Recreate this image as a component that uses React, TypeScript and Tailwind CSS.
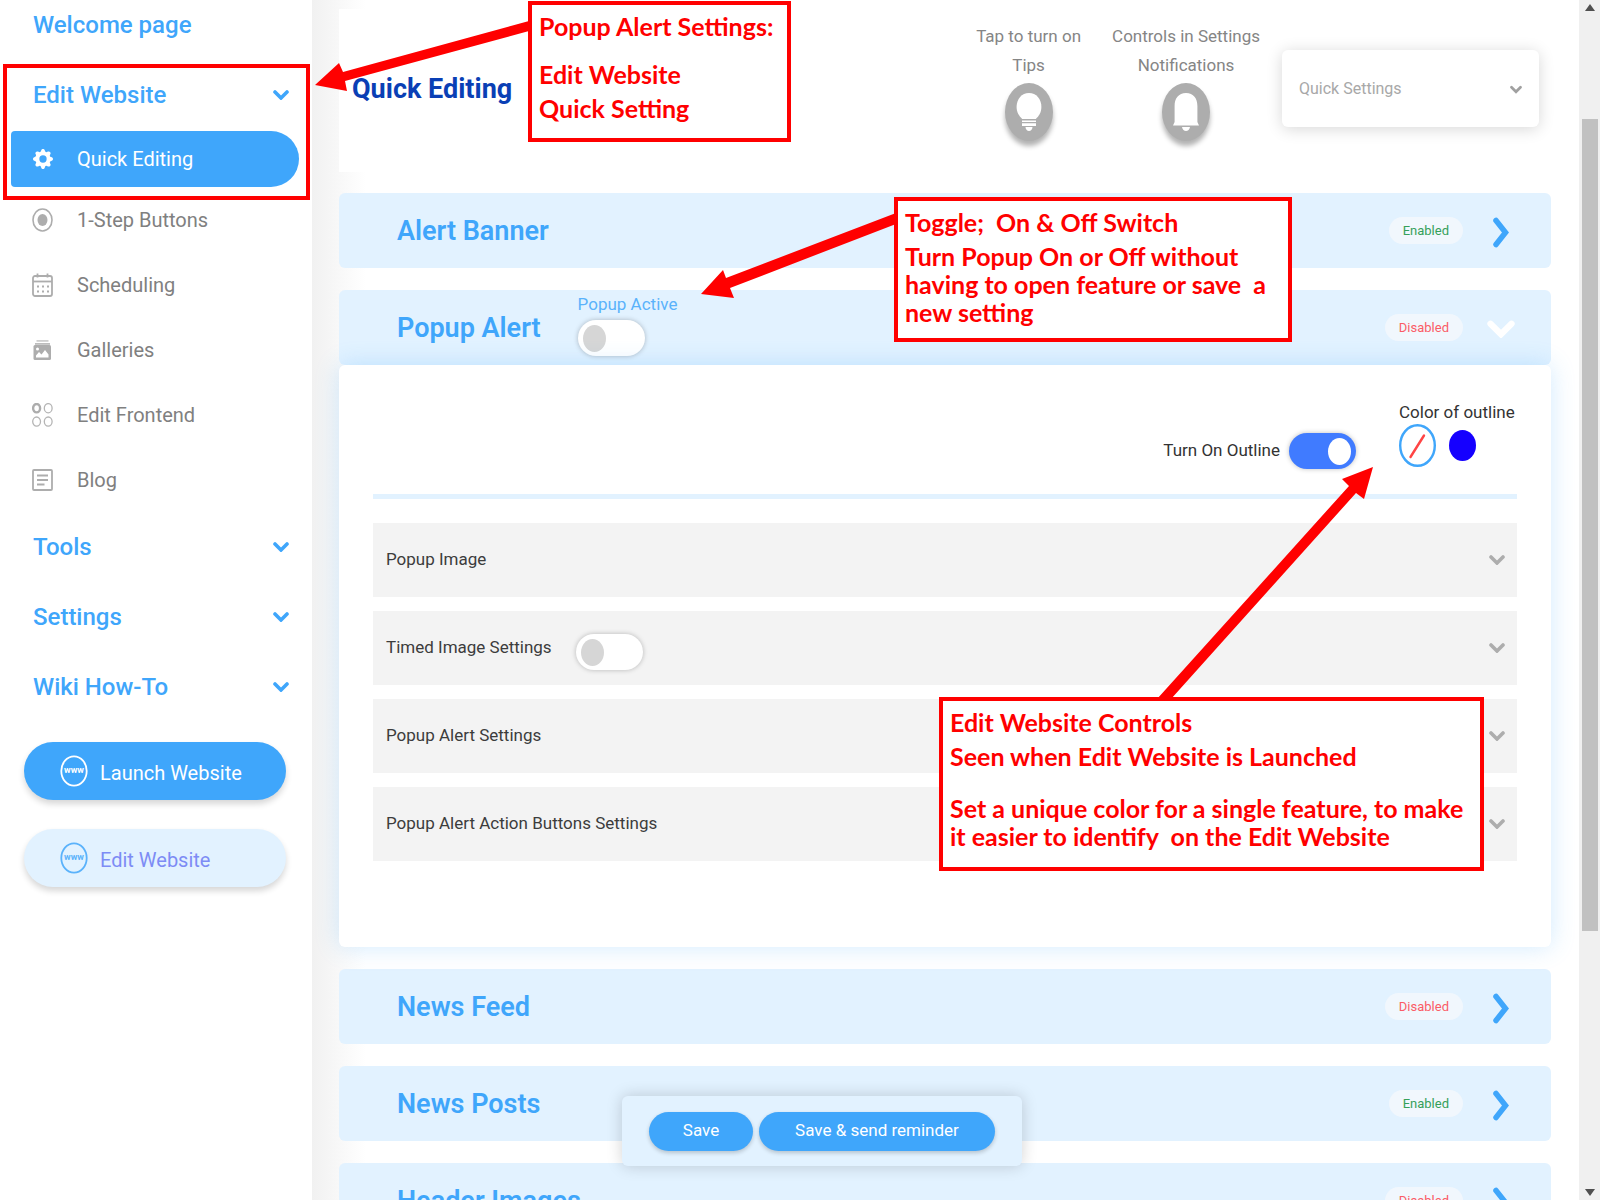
import { useState } from "react";
import type { ReactNode } from "react";
import { BsGearFill } from "react-icons/bs";

const Chevron = ({ className }: { className: string }) => (
  <svg viewBox="0 0 16 10" fill="none" stroke="currentColor" className={className} aria-hidden="true">
    <path d="M2 2l6 6 6-6" strokeWidth="3.6" strokeLinecap="round" />
  </svg>
);

const RadioIcon = () => (
  <svg viewBox="0 0 21 24" className="w-[21px] h-6" aria-hidden="true">
    <ellipse cx="10.5" cy="12" rx="9.5" ry="11" fill="none" stroke="#adadad" strokeWidth="1.6" />
    <ellipse cx="10.5" cy="12" rx="5" ry="6" fill="#adadad" />
  </svg>
);

const CalendarIcon = () => (
  <svg viewBox="0 0 21 24" className="w-[21px] h-6" fill="none" stroke="#adadad" aria-hidden="true">
    <rect x="1" y="3" width="19" height="20" rx="2" strokeWidth="1.8" />
    <path d="M1 8.5h19" strokeWidth="1.8" />
    <path d="M5.5 0.5v4M15.5 0.5v4" strokeWidth="1.8" />
    <path d="M5 13.5h12M5 18.5h12" strokeWidth="2" strokeDasharray="2 3" />
  </svg>
);

const GalleryIcon = () => (
  <svg viewBox="0 0 21 24" className="w-[21px] h-6" aria-hidden="true">
    <path d="M4.5 2h12v1.8h-12z" fill="#cfcfcf" />
    <path d="M3 5h15v1.800H3z" fill="#bdbdbd" />
    <rect x="1.5" y="7" width="17.5" height="15" rx="1.5" fill="#adadad" />
    <circle cx="5.5" cy="11" r="1.5" fill="#fff" />
    <path d="M4 19.5v-2l3-3.5 2.5 2.5L13 12l3.5 4.5v3z" fill="#fff" />
  </svg>
);

const CirclesIcon = () => (
  <svg viewBox="0 0 21 24" className="w-[21px] h-6" fill="none" stroke="#b5b5b5" aria-hidden="true">
    <ellipse cx="4.6" cy="5.2" rx="3.5" ry="4.2" strokeWidth="2.4" stroke="#adadad" />
    <ellipse cx="16.2" cy="5.2" rx="3.9" ry="4.6" strokeWidth="1.3" />
    <ellipse cx="4.6" cy="18.6" rx="3.9" ry="4.6" strokeWidth="1.3" />
    <ellipse cx="16.2" cy="18.6" rx="3.9" ry="4.6" strokeWidth="1.3" />
  </svg>
);

const BlogIcon = () => (
  <svg viewBox="0 0 21 24" className="w-[21px] h-6" fill="none" stroke="#adadad" strokeWidth="1.8" aria-hidden="true">
    <rect x="1" y="2" width="19" height="20" rx="1" />
    <path d="M5 7.5h11M5 12h11M5 16.5h7.5" />
  </svg>
);

const WwwIcon = () => (
  <svg viewBox="0 0 28 32" className="w-7 h-8" aria-hidden="true">
    <ellipse cx="14" cy="16" rx="12.7" ry="14.7" fill="none" stroke="currentColor" strokeWidth="1.8" />
    <text x="14" y="18" textAnchor="middle" fontSize="9" fontWeight="700" fill="currentColor">
      www
    </text>
  </svg>
);

const BulbIcon = () => (
  <svg viewBox="0 0 26 38" className="w-[26px] h-[38px]" fill="#fff" aria-hidden="true">
    <path d="M13 0C5.800 0 0.600 6 0.600 14c0 5.500 2.600 9 5.600 12h13.600c3-3 5.600-6.500 5.600-12C25.400 6 20.200 0 13 0z" />
    <path d="M6 27.5h14v1.5H6zM6 30.3h14v2.6H6z" />
    <path d="M9.5 34h7c0 2-1.5 4-3.5 4s-3.5-2-3.5-4z" />
  </svg>
);

const BellIcon = () => (
  <svg viewBox="0 0 26 38" className="w-[26px] h-[38px]" fill="#fff" aria-hidden="true">
    <path d="M13 0C5.500 0 1.600 5.500 1.600 13v16L0 32.500h26L24.400 29V13C24.400 5.500 20.500 0 13 0z" />
    <path d="M9 34h8c-.5 2.500-2 4-4 4s-3.500-1.500-4-4z" />
  </svg>
);

const Toggle = ({ id, label, initial = false }: { id: string; label?: string; initial?: boolean }) => {
  const [on, setOn] = useState(initial);
  return (
    <input
      id={id}
      type="checkbox"
      role="switch"
      aria-label={label}
      checked={on}
      onChange={() => setOn(!on)}
      className="appearance-none shrink-0 w-[67px] h-9 rounded-full bg-white px-[5px] flex items-center shadow-[0_0_5px_rgba(0,0,0,0.25)] cursor-pointer before:block before:w-[23px] before:h-[27px] before:rounded-[50%] before:bg-[#d6d6d6] checked:justify-end checked:bg-[#407bff] checked:before:bg-white"
    />
  );
};

const Badge = ({ enabled }: { enabled: boolean }) => (
  <span
    className={`h-[27px] px-[14px] rounded-full bg-[#f1f7fd] flex items-center text-[13px] ${
      enabled ? "text-[#35a05a]" : "text-[#fb5c66]"
    }`}
  >
    {enabled ? "Enabled" : "Disabled"}
  </span>
);

const FeatureBar = ({
  title,
  enabled,
  open = false,
  children,
}: {
  title: string;
  enabled: boolean;
  open?: boolean;
  children?: ReactNode;
}) => (
  <div className="h-[75px] shrink-0 rounded-md pl-[58px] pr-9 flex items-center bg-[#e2f2ff]">
    <h2 className="text-[27px] leading-9 font-semibold text-[#3fa6fb]">{title}</h2>
    {children}
    <div className="ml-auto flex items-center gap-6">
      <Badge enabled={enabled} />
      <button
        aria-label={`Expand ${title}`}
        aria-expanded={open}
        className="w-7 h-8 mt-[3px] flex items-center justify-center"
      >
        {open ? (
          <Chevron className="w-7 h-[18px] text-white" />
        ) : (
          <svg viewBox="0 0 18 32" fill="none" className="w-[18px] h-8" aria-hidden="true">
            <path d="M4 4.500l9.500 12L4 28.500" stroke="#3fa6fb" strokeWidth="5.500" strokeLinecap="round" />
          </svg>
        )}
      </button>
    </div>
  </div>
);

const navItems = [
  { label: "1-Step Buttons", icon: RadioIcon },
  { label: "Scheduling", icon: CalendarIcon },
  { label: "Galleries", icon: GalleryIcon },
  { label: "Edit Frontend", icon: CirclesIcon },
  { label: "Blog", icon: BlogIcon },
];

const NavSection = ({ label }: { label: string }) => (
  <button className="w-full h-[70px] pl-[33px] pr-[23px] flex items-center justify-between text-2xl font-medium text-[#3fa6fb]">
    {label}
    <Chevron className="w-4 h-[10px]" />
  </button>
);

const Sidebar = () => (
  <aside className="w-[312px] shrink-0 bg-white">
    <nav>
      <a href="#welcome" className="h-[49px] mb-[11px] pl-[33px] flex items-center text-2xl font-medium text-[#3fa6fb]">
        Welcome page
      </a>
      <NavSection label="Edit Website" />
      <a
        href="#quick-editing"
        className="mt-px ml-[11px] mr-[13px] h-14 pl-[22px] rounded-l-[4px] rounded-r-[28px] bg-[#3fa6fb] flex items-center gap-6 text-xl text-white"
      >
        <BsGearFill className="w-5 h-[22px]" />
        Quick Editing
      </a>
      {navItems.map((item) => (
        <a key={item.label} href="#" className="h-[65px] pl-8 flex items-center gap-6 text-xl text-[#808080]">
          <item.icon />
          {item.label}
        </a>
      ))}
      <NavSection label="Tools" />
      <NavSection label="Settings" />
      <NavSection label="Wiki How-To" />
    </nav>
    <div className="mt-5 ml-6 mr-[26px] flex flex-col gap-[29px]">
      <button className="h-[58px] pl-9 rounded-full bg-[#3fa6fb] text-white text-xl flex items-center gap-3 shadow-[0_4px_6px_rgba(0,0,0,0.16)]">
        <WwwIcon />
        <span className="pt-[3px]">Launch Website</span>
      </button>
      <button className="h-[58px] pl-9 rounded-full bg-[#e2f2ff] text-[#7d8cf5] text-xl flex items-center gap-3 shadow-[0_4px_6px_rgba(0,0,0,0.16)]">
        <span className="text-[#5ab2fb]">
          <WwwIcon />
        </span>
        <span className="pt-[3px]">Edit Website</span>
      </button>
    </div>
  </aside>
);

const HeaderAction = ({ first, second, children }: { first: string; second: string; children: ReactNode }) => (
  <button className="flex flex-col items-center text-[17px] leading-[29px] text-[#858585]">
    <span>{first}</span>
    <span>{second}</span>
    <span className="mt-[3px] w-12 h-[58px] rounded-[50%] bg-[#adadad] flex items-center justify-center shadow-[0_5px_5px_rgba(0,0,0,0.3)]">
      {children}
    </span>
  </button>
);

const Header = () => (
  <header className="h-[163px] shrink-0 bg-white pl-[13px] pr-3 flex items-start">
    <h1 className="mt-[62px] text-[27px] leading-9 font-bold text-[#0a3fb5]">Quick Editing</h1>
    <div className="ml-auto mt-[13px] flex items-start gap-[31px]">
      <HeaderAction first="Tap to turn on" second="Tips">
        <BulbIcon />
      </HeaderAction>
      <HeaderAction first="Controls in Settings" second="Notifications">
        <BellIcon />
      </HeaderAction>
    </div>
    <label className="relative ml-[22px] mt-[41px] w-[257px]">
      <select
        aria-label="Quick Settings"
        className="appearance-none w-full h-[77px] px-[17px] rounded-md bg-white text-base text-[#a8a8a8] shadow-[0_2px_16px_rgba(0,0,0,0.16)]"
      >
        <option>Quick Settings</option>
      </select>
      <Chevron className="absolute right-[17px] top-[35px] w-3 h-[9px] text-[#a0a0a0] pointer-events-none" />
    </label>
  </header>
);

const settingRows = [
  { label: "Popup Image" },
  { label: "Timed Image Settings", toggle: true },
  { label: "Popup Alert Settings" },
  { label: "Popup Alert Action Buttons Settings" },
];

const PopupPanel = () => (
  <div className="relative h-[582px] shrink-0 mb-[22px] px-[34px] rounded-md bg-white shadow-[0_0_24px_rgba(63,166,251,0.24)]">
    <div className="h-[129px] flex justify-end">
      <div className="mt-[68px] h-9 flex items-center gap-[9px]">
        <label htmlFor="outline" className="text-[17px] text-[#333]">
          Turn On Outline
        </label>
        <Toggle id="outline" initial />
      </div>
      <fieldset className="ml-[43px] pt-[35px] w-[118px]">
        <legend className="contents">
          <span className="block text-[17px] leading-6 text-[#333]">Color of outline</span>
        </legend>
        <div className="flex items-center gap-[13px]">
          <button type="button" aria-label="No color" className="w-[37px] h-[43px]">
            <svg viewBox="0 0 37 43" aria-hidden="true">
              <ellipse cx="18.5" cy="21.5" rx="17.3" ry="20.3" fill="#fff" stroke="#3fa6fb" strokeWidth="2.4" />
              <path d="M11.5 33L25 11.5" stroke="#f44" strokeWidth="2.4" strokeLinecap="round" />
            </svg>
          </button>
          <button type="button" aria-label="Blue" className="w-[27px] h-[31px] rounded-[50%] bg-[#1500ff]" />
        </div>
      </fieldset>
    </div>
    <hr className="h-[5px] border-0 bg-[#e2f2ff]" />
    <div className="mt-6 flex flex-col gap-[14px]">
      {settingRows.map((row) => (
        <div key={row.label} className="h-[74px] pl-[13px] pr-3 bg-[#f3f3f3] flex items-center text-[17px] text-[#3c3c3c]">
          <span>{row.label}</span>
          {row.toggle && (
            <span className="ml-6 mt-2">
              <Toggle id="timed-image" label={row.label} />
            </span>
          )}
          <button aria-label={`Open ${row.label}`} className="ml-auto">
            <Chevron className="w-4 h-[10px] text-[#adadad]" />
          </button>
        </div>
      ))}
    </div>
  </div>
);

const SaveBar = () => (
  <div className="absolute left-[622px] bottom-[34px] h-[70px] px-[27px] rounded-md bg-[#e2f2ff] flex items-center gap-[6px] shadow-[0_0_16px_rgba(0,0,0,0.18)] text-[17px] text-white">
    <button className="h-[39px] w-[104px] rounded-full bg-[#3fa6fb] shadow-[0_2px_4px_rgba(0,0,0,0.2)]">Save</button>
    <button className="h-[39px] w-[236px] rounded-full bg-[#3fa6fb] shadow-[0_2px_4px_rgba(0,0,0,0.2)]">
      Save & send reminder
    </button>
  </div>
);

const Scrollbar = () => (
  <div className="w-[21px] shrink-0 bg-[#f0f0f0] flex flex-col items-center justify-between py-1" aria-hidden="true">
    <svg viewBox="0 0 10 7" className="w-[10px] h-[7px]">
      <path d="M5 0l5 7H0z" fill="#505050" />
    </svg>
    <div className="w-4 h-[812px] mb-[150px] bg-[#c1c1c1]" />
    <svg viewBox="0 0 10 7" className="w-[10px] h-[7px]">
      <path d="M5 7l5-7H0z" fill="#505050" />
    </svg>
  </div>
);

// Red notes and arrows that lie over the page
const Annotations = () => (
  <div className="absolute inset-0 pointer-events-none font-['Lato','Open_Sans',sans-serif] text-[25px] leading-7 font-bold text-[#f00]">
    <svg viewBox="0 0 1600 1200" className="absolute left-0 top-0 w-[1600px] h-[1200px]" fill="#f00" aria-hidden="true">
      <path d="M529 21L343 72l-4-9-24 22 32 6-2-10 184-50z" />
      <path d="M896 213L726 278l-3-8-22 24 33 4-4-10 166-64z" />
      <path d="M1157 699L1349 486l-7-7 31-12-9 32-8-6-185 206z" />
    </svg>
    <div className="absolute left-[3px] top-[64px] w-[307px] h-[136px] border-4 border-[#f00]" />
    <div className="absolute left-[528px] top-px w-[263px] h-[141px] border-4 border-[#f00] bg-white pl-[7px] pt-[7px] whitespace-pre">
      <p>Popup Alert Settings:</p>
      <p className="mt-5">Edit Website</p>
      <p className="mt-[6px]">Quick Setting</p>
    </div>
    <div className="absolute left-[894px] top-[197px] w-[398px] h-[145px] border-4 border-[#f00] bg-white pl-[7px] pt-[7px] whitespace-pre">
      <p>Toggle;  On & Off Switch</p>
      <p className="mt-[6px]">
        {"Turn Popup On or Off without\nhaving to open feature or save  a\nnew setting"}
      </p>
    </div>
    <div className="absolute left-[939px] top-[697px] w-[545px] h-[174px] border-4 border-[#f00] bg-white pl-[7px] pt-[7px] whitespace-pre">
      <p>Edit Website Controls</p>
      <p className="mt-[6px]">Seen when Edit Website is Launched</p>
      <p className="mt-6">{"Set a unique color for a single feature, to make\nit easier to identify  on the Edit Website"}</p>
    </div>
  </div>
);

const App = () => (
  <div className="relative h-screen overflow-hidden flex bg-white font-['Roboto','Inter',sans-serif]">
    <Sidebar />
    <main className="flex-1 min-w-0 pt-[9px] pl-[27px] pr-[28px] flex flex-col bg-[linear-gradient(to_right,#f1f1f1,#fff_54px)]">
      <Header />
      <div className="mt-[21px] flex flex-col">
        <FeatureBar title="Alert Banner" enabled />
        <div className="mt-[22px]">
          <FeatureBar title="Popup Alert" enabled={false} open>
            <div className="ml-[37px] self-start flex flex-col gap-[2px]">
              <label htmlFor="popup-active" className="text-[17px] leading-7 text-[#5ab2fb]">
                Popup Active
              </label>
              <Toggle id="popup-active" />
            </div>
          </FeatureBar>
          <PopupPanel />
        </div>
        <div className="flex flex-col gap-[22px]">
          <FeatureBar title="News Feed" enabled={false} />
          <FeatureBar title="News Posts" enabled />
          <FeatureBar title="Header Images" enabled={false} />
        </div>
      </div>
    </main>
    <Scrollbar />
    <SaveBar />
    <Annotations />
  </div>
);

export default App;
